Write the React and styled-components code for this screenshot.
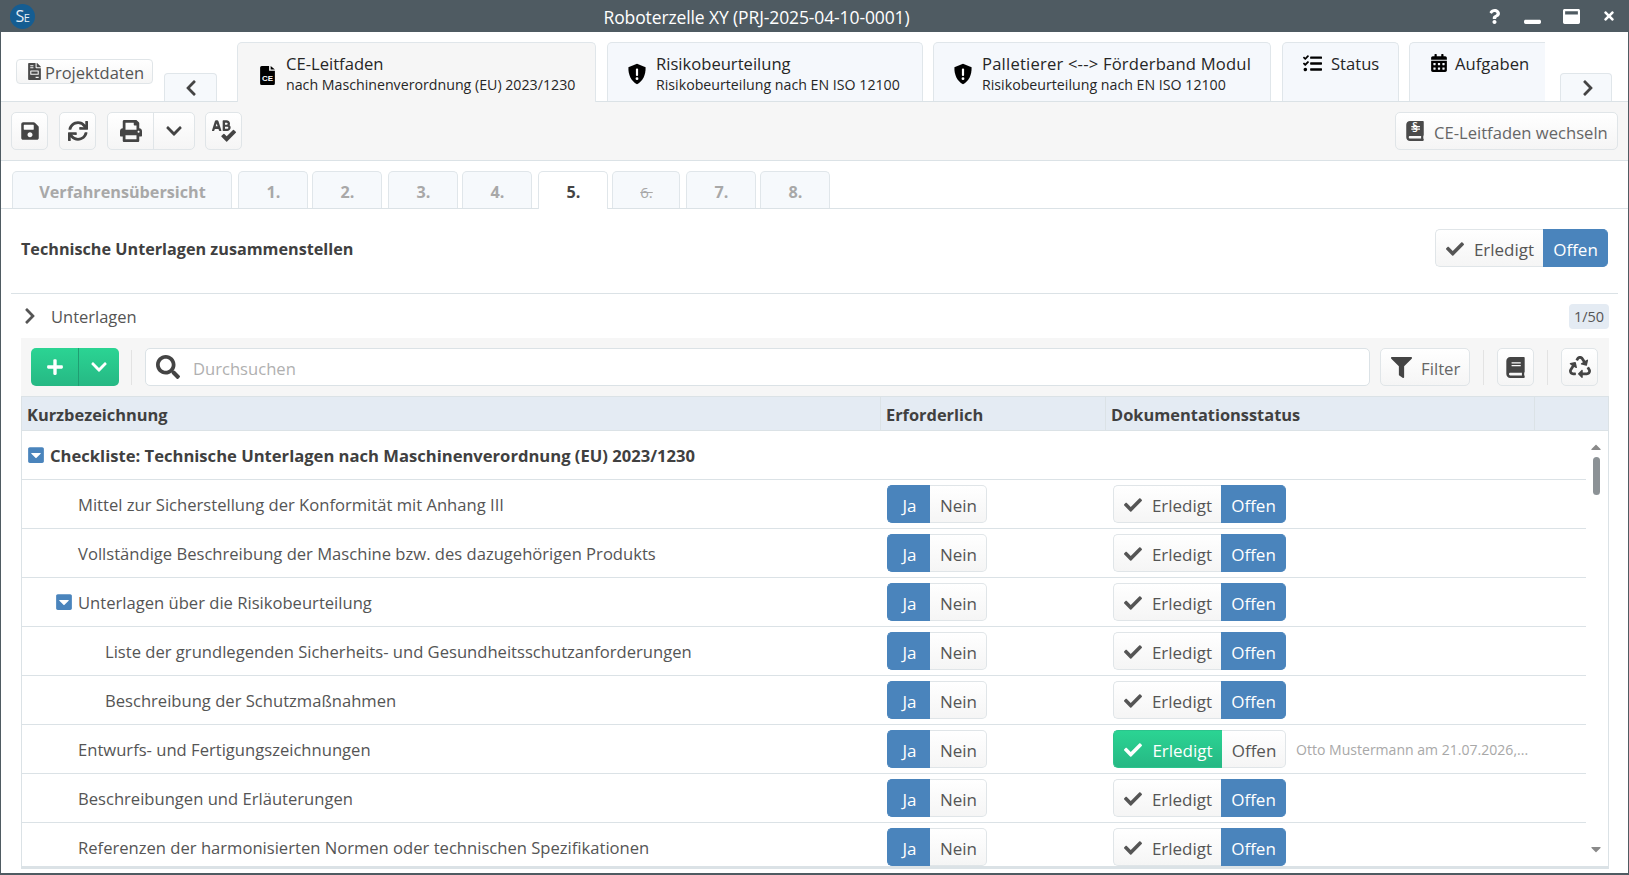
import React from "react";
import styled, { createGlobalStyle } from "styled-components";
import {
  FaSave, FaSync, FaPrint, FaChevronDown, FaChevronLeft, FaChevronRight, FaSpellCheck, FaFileInvoice, FaTasks,
  FaCalendarAlt, FaBook, FaRecycle, FaFilter, FaSearch, FaPlus, FaCheck, FaCaretSquareDown, FaQuestion,
  FaWindowMinimize, FaWindowMaximize, FaTimes, FaCaretUp, FaCaretDown,
} from "react-icons/fa";

const Global = createGlobalStyle`
  html, body { margin: 0; padding: 0; height: 100%; overflow: hidden; background: #fff; }
  * { box-sizing: border-box; }
  body { font-family: "Open Sans", "Liberation Sans", sans-serif; color: #4a4a4a; }
`;

const Win = styled.div`
  width: 1629px; height: 875px; display: flex; flex-direction: column;
  border: 1px solid #4f5b62; border-top: 0; border-bottom-width: 2px; overflow: hidden; background: #fff;
`;
const TitleBar = styled.div`
  height: 32px; flex: none; background: #4f5b62; color: #fff; display: flex; align-items: center;
  padding: 0 12px 0 9px; position: relative; font-size: 17.5px;
`;
const Logo = styled.div`
  width: 25px; height: 25px; border-radius: 50%; background: #155d92; color: #e6eef5; font-size: 16px; font-weight: 400;
  display: flex; align-items: center; justify-content: center; letter-spacing: -0.5px; flex: none;
  small { font-size: 11px; margin-top: 2px; }
`;
const TitleText = styled.div`
  flex: 1; text-align: center; padding: 2px 9px 0 0; letter-spacing: -0.12px;
`;
const WinBtns = styled.div`
  display: flex; align-items: center; gap: 22px; height: 100%;
  svg { display: block; }
`;
const TabRow = styled.div`
  height: 70px; flex: none; display: flex; align-items: flex-end; border-bottom: 1px solid #dbe2e6;
  padding-left: 15px; background: #fff; position: relative;
`;
const ProjectBtn = styled.div`
  width: 137px; height: 25px; align-self: flex-start; margin-top: 27px; margin-right: 11px;
  border: 1px solid #e0e5e8; border-radius: 4px; background: linear-gradient(#fff, #f5f5f5);
  display: flex; align-items: center; padding: 2px 0 0 9px; gap: 2px; font-size: 16.5px; color: #555;
  svg { color: #4a4a4a; margin-top: -3px; }
`;
const ArrowTab = styled.div`
  width: ${(p) => p.$w}px; height: 28px; margin-right: ${(p) => p.$mr || 0}px; margin-left: ${(p) => p.$ml || 0}px;
  padding-left: ${(p) => p.$pl || 0}px;
  background: #f6f9fc; border: 1px solid #e0e6ea; border-bottom: 0; border-radius: 4px 4px 0 0;
  display: flex; align-items: center; justify-content: center; color: #444; margin-bottom: 0;
`;
const DocTab = styled.div`
  width: ${(p) => p.$w}px; height: 59px; margin-right: ${(p) => p.$mr ?? 10}px; flex: none;
  background: ${(p) => (p.$active ? "#f6f6f6" : "#f5f8fc")};
  border: 1px solid #e0e6ea; border-bottom: 0; border-radius: 5px 5px 0 0;
  ${(p) => p.$cut && "border-right: 0; border-top-right-radius: 0;"}
  ${(p) => p.$active && "position: relative; margin-bottom: -1px; height: 60px;"}
  display: flex; align-items: ${(p) => (p.$single ? "flex-start" : "center")};
  padding: ${(p) => (p.$single ? "10px 0 0 20px" : "0 0 0 " + (p.$pl || 21) + "px")}; gap: ${(p) => p.$gap ?? 10}px; color: #222;
`;
const TabIcon = styled.div`
  flex: none; display: flex; color: #000; ${(p) => p.$top && `margin-top: ${p.$top}px;`}
`;
const TabText = styled.div`
  display: flex; flex-direction: column; line-height: 20px; white-space: nowrap; margin-top: 3px;
`;
const TabMain = styled.span`
  font-size: 16.6px; color: #262626; line-height: 22px; letter-spacing: ${(p) => p.$spread || 0}px;
`;
const TabSub = styled.span`
  font-size: 14.2px; color: #262626; line-height: 20px;
`;
const Tools = styled.div`
  height: 59px; flex: none; background: #f6f6f6; border-bottom: 1px solid #dbe2e6; display: flex;
  align-items: flex-start; padding: 10px 10px 0 10px; position: relative;
`;
const IconBtn = styled.div`
  width: ${(p) => p.$w || 37}px; height: 38px; margin-right: ${(p) => p.$mr ?? 11}px; flex: none;
  border: 1px solid #e0e5e8; border-radius: 5px; background: linear-gradient(#fff, #f5f5f5);
  display: flex; align-items: center; justify-content: center; color: #444;
`;
const SplitBtn = styled.div`
  display: flex; height: 38px; border: 1px solid #e0e5e8; border-radius: 5px; background: linear-gradient(#fff, #f5f5f5);
  margin-right: 10px; color: #444;
`;
const SplitPart = styled.div`
  width: ${(p) => p.$w}px; display: flex; align-items: center; justify-content: center;
  & + & { border-left: 1px solid #e0e5e8; }
`;
const SwitchBtn = styled.div`
  margin-left: auto; width: 223px; height: 38px; border: 1px solid #e0e5e8; border-radius: 5px;
  background: linear-gradient(#fff, #f5f5f5); display: flex; align-items: center; padding-left: 9px; gap: 9px;
  font-size: 16.6px; color: #666; white-space: nowrap; position: relative;
`;
const SwitchLabel = styled.span` padding-top: 2px; `;
const ParaBook = styled.span`
  position: relative; display: flex; color: #4a4a4a;
  b { position: absolute; left: 0; right: 0; top: -2px; text-align: center; font-size: 12px; color: #fff; font-weight: 600; }
`;
const StepBar = styled.div`
  height: 48px; flex: none; display: flex; align-items: flex-end; padding-left: 11px; border-bottom: 1px solid #dbe2e6;
`;
const Step = styled.div`
  width: ${(p) => p.$w}px; height: 37px; margin-right: ${(p) => p.$mr}px; flex: none; padding: 3px 0 0 1px;
  background: ${(p) => (p.$active ? "#fff" : "#f6f9fc")}; border: 1px solid #e0e6ea; border-bottom: 0; border-radius: 5px 5px 0 0;
  ${(p) => p.$active && "margin-bottom: -1px; height: 38px; padding-top: 2px;"}
  display: flex; align-items: center; justify-content: center; font-size: 16.2px;
  font-weight: ${(p) => (p.$off ? 400 : 700)}; color: ${(p) => (p.$active ? "#444" : "#a8a8a8")};
  ${(p) => p.$off && "text-decoration: line-through; font-size: 15px;"}
`;
const Content = styled.div`
  flex: 1; min-height: 0; display: flex; flex-direction: column; padding: 0 10px;
`;
const SectionHead = styled.div`
  height: 85px; flex: none; display: flex; align-items: flex-start; justify-content: space-between;
  border-bottom: 1px solid #dbe2e6; padding: 20px 10px 0 10px;
`;
const SectionTitle = styled.div`
  font-size: 16.2px; font-weight: 700; color: #404040; line-height: 40px;
`;
const Toggle = styled.div`
  display: flex; height: 38px; border-radius: 5px; flex: none; font-size: 17px;
`;
const Seg = styled.div`
  width: ${(p) => p.$w}px; display: flex; align-items: center; gap: 10px; justify-content: center; padding: 2px 0 0 1px;
  border: 1px solid #e0e5e8; background: linear-gradient(#fff, #f5f5f5); color: #555;
  svg { margin-top: -1px; }
  &:first-child { border-radius: 5px 0 0 5px; border-right: 0; }
  &:last-child { border-radius: 0 5px 5px 0; border-left: 0; }
  ${(p) => p.$blue && "background: #4a84bc; border-color: #4a84bc !important; color: #fff;"}
  ${(p) => p.$green && "background: linear-gradient(#2bd493, #26b884); border-color: #2bc48c !important; color: #fff;"}
`;
const Accordion = styled.div`
  height: 44px; flex: none; display: flex; align-items: center; padding: 0 9px 0 10px; font-size: 16.5px; color: #555;
`;
const AccLabel = styled.span` margin-left: 12px; flex: 1; `;
const Badge = styled.span`
  width: 40px; height: 25px; background: #e4ebf3; border-radius: 4px; font-size: 14.5px; display: flex;
  align-items: center; justify-content: center; color: #555;
`;
const Panel = styled.div`
  margin-left: 10px; margin-right: 9px; flex: 1; min-height: 0; display: flex; flex-direction: column;
`;
const SearchBar = styled.div`
  height: 58px; flex: none; background: #f6f6f6; display: flex; align-items: center; padding: 0 11px 0 10px;
`;
const GreenBtn = styled.div`
  display: flex; width: 88px; height: 38px; border-radius: 5px; background: linear-gradient(#2bd493, #26b884); color: #fff;
`;
const GreenPart = styled.div`
  display: flex; align-items: center; justify-content: center; width: ${(p) => p.$w}px;
  & + & { border-left: 1px solid #1f9e72; }
`;
const VLine = styled.div`
  width: 1px; height: 35px; background: #e3e3e3; margin: 0 ${(p) => p.$r}px 0 ${(p) => p.$l}px; flex: none;
`;
const SearchBox = styled.div`
  flex: 1; height: 38px; border: 1px solid #dbe2e6; border-radius: 5px; background: #fff; display: flex; align-items: center;
  padding: 2px 0 0 10px; gap: 13px; font-size: 16.6px; color: #b0b0b0; margin-right: 10px;
  svg { color: #444; margin-top: -2px; }
`;
const FilterBtn = styled.div`
  width: 90px; height: 38px; flex: none; border: 1px solid #e0e5e8; border-radius: 5px; background: linear-gradient(#fff, #f5f5f5);
  display: flex; align-items: center; padding: 2px 0 0 10px; gap: 9px; font-size: 16.8px; color: #666;
  svg { color: #444; margin-top: -2px; }
`;
const TableHead = styled.div`
  height: 35px; flex: none; display: grid; grid-template-columns: 858px 225px 429px 1fr; background: #e4ebf3;
  border-top: 1px solid #dbe2e6; border-bottom: 1px solid #dbe2e6; border-left: 1px solid #dbe2e6; border-right: 1px solid #dbe2e6;
`;
const HeadCell = styled.div`
  padding: 2px 0 0 5px; font-size: 16.4px; font-weight: 700; color: #404040; display: flex; align-items: center;
  & + & { border-left: 1px solid #dbe2e6; }
`;
const BodyWrap = styled.div`
  height: 438px; flex: none; display: flex; overflow: hidden; border-left: 1px solid #dbe2e6; border-right: 1px solid #dbe2e6;
  border-bottom: 3px solid #dbe2e6;
`;
const Rows = styled.div`
  flex: 1; min-width: 0; overflow: hidden;
`;
const Row = styled.div`
  height: 49px; flex: none; display: grid; grid-template-columns: 858px 226px 1fr;
  border-bottom: 1px solid #dbe2e6; align-items: start;
`;
const NameCell = styled.div`
  height: 48px; display: flex; align-items: center; padding-left: ${(p) => p.$indent}px; font-size: 16.6px; color: #555; white-space: nowrap;
  font-weight: ${(p) => (p.$bold ? 700 : 400)}; ${(p) => p.$bold && "color: #404040;"}
  svg { color: #4a84bc; margin-right: 5px; background: #fff; flex: none; }
`;
const CtlCell = styled.div`
  padding: 5px 0 0 7px; display: flex; align-items: flex-start;
`;
const Note = styled.div`
  font-size: 14.05px; color: #a8a8a8; margin-left: 10px; height: 38px; display: flex; align-items: center; white-space: nowrap;
`;
const Scroll = styled.div`
  width: 22px; flex: none; position: relative; color: #8a8a8a;
`;
const ScrollUp = styled.div` position: absolute; top: 8px; left: 2px; display: flex; `;
const ScrollDown = styled.div` position: absolute; bottom: 9px; left: 2px; display: flex; `;
const Thumb = styled.div`
  position: absolute; top: 26px; left: 7px; width: 7px; height: 38px; background: #8c9296; border-radius: 4px;
`;

const Shield = ({ size = 22 }) => (
  <svg width={size} height={size} viewBox="0 0 20 22">
    <path d="M10 .8 18.6 4.2c.2 7.6-2.6 13.8-8.6 17-6-3.2-8.8-9.4-8.6-17z" fill="#000" />
    <rect x="8.9" y="5.4" width="2.2" height="7.6" rx="1" fill="#fff" />
    <circle cx="10" cy="15.7" r="1.4" fill="#fff" />
  </svg>
);
const CeFile = () => (
  <svg width="15" height="19" viewBox="0 0 14 18">
    <path d="M1.5 0H8.5V4.5H14V16.5a1.5 1.5 0 0 1-1.5 1.5H1.5A1.5 1.5 0 0 1 0 16.5V1.5A1.5 1.5 0 0 1 1.5 0ZM10 0l4 3.4H10Z" fill="#000" />
    <text x="7" y="14.2" fontSize="7.5" fontWeight="700" fill="#fff" textAnchor="middle" fontFamily="Liberation Sans">CE</text>
  </svg>
);
const rows = [
  { name: "Mittel zur Sicherstellung der Konformität mit Anhang III", indent: 56 },
  { name: "Vollständige Beschreibung der Maschine bzw. des dazugehörigen Produkts", indent: 56 },
  { name: "Unterlagen über die Risikobeurteilung", indent: 33, caret: true },
  { name: "Liste der grundlegenden Sicherheits- und Gesundheitsschutzanforderungen", indent: 83 },
  { name: "Beschreibung der Schutzmaßnahmen", indent: 83 },
  { name: "Entwurfs- und Fertigungszeichnungen", indent: 56, done: true },
  { name: "Beschreibungen und Erläuterungen", indent: 56 },
  { name: "Referenzen der harmonisierten Normen oder technischen Spezifikationen", indent: 56 },
];

const StatusToggle = ({ done, w1 = 108, w2 = 65 }) => (
  <Toggle>
    <Seg $w={w1} $green={done}><FaCheck size={18} />Erledigt</Seg>
    <Seg $w={w2} $blue={!done}>Offen</Seg>
  </Toggle>
);

export default function App() {
  return (
    <Win>
      <Global />
      <TitleBar>
        <Logo>S<small>E</small></Logo>
        <TitleText>Roboterzelle XY (PRJ-2025-04-10-0001)</TitleText>
        <WinBtns>
          <FaQuestion size={15} />
          <FaWindowMinimize size={17} />
          <FaWindowMaximize size={17} />
          <FaTimes size={14} />
        </WinBtns>
      </TitleBar>
      <TabRow>
        <ProjectBtn><FaFileInvoice size={17} />Projektdaten</ProjectBtn>
        <ArrowTab $w={53} $mr={20}><FaChevronLeft size={18} /></ArrowTab>
        <DocTab $w={359} $mr={11} $active $pl={22} $gap={11}>
          <TabIcon $top={6}><CeFile /></TabIcon>
          <TabText><TabMain>CE-Leitfaden</TabMain><TabSub>nach Maschinenverordnung (EU) 2023/1230</TabSub></TabText>
        </DocTab>
        <DocTab $w={316} $pl={18} $gap={8}>
          <TabIcon $top={3}><Shield /></TabIcon>
          <TabText><TabMain>Risikobeurteilung</TabMain><TabSub>Risikobeurteilung nach EN ISO 12100</TabSub></TabText>
        </DocTab>
        <DocTab $w={338} $mr={11} $pl={18} $gap={8}>
          <TabIcon $top={3}><Shield /></TabIcon>
          <TabText><TabMain $spread={0.2}>Palletierer &lt;--&gt; Förderband Modul</TabMain><TabSub>Risikobeurteilung nach EN ISO 12100</TabSub></TabText>
        </DocTab>
        <DocTab $w={117} $single $gap={9}>
          <TabIcon $top={1}><FaTasks size={19} /></TabIcon><TabMain>Status</TabMain>
        </DocTab>
        <DocTab $w={136} $mr={0} $single $cut $gap={7}>
          <TabIcon $top={1}><FaCalendarAlt size={18} /></TabIcon><TabMain>Aufgaben</TabMain>
        </DocTab>
        <ArrowTab $w={52} $ml={15} $pl={4}><FaChevronRight size={18} /></ArrowTab>
      </TabRow>
      <Tools>
        <IconBtn><FaSave size={20} /></IconBtn>
        <IconBtn><FaSync size={20} /></IconBtn>
        <SplitBtn>
          <SplitPart $w={45}><FaPrint size={22} /></SplitPart>
          <SplitPart $w={41}><FaChevronDown size={18} /></SplitPart>
        </SplitBtn>
        <IconBtn $mr={0}><FaSpellCheck size={24} /></IconBtn>
        <SwitchBtn>
          <ParaBook><FaBook size={20} /><b>§</b></ParaBook>
          <SwitchLabel>CE-Leitfaden wechseln</SwitchLabel>
        </SwitchBtn>
      </Tools>
      <StepBar>
        <Step $w={220} $mr={6}>Verfahrensübersicht</Step>
        <Step $w={70} $mr={4}>1.</Step>
        <Step $w={70} $mr={6}>2.</Step>
        <Step $w={70} $mr={4}>3.</Step>
        <Step $w={70} $mr={6}>4.</Step>
        <Step $w={70} $mr={4} $active>5.</Step>
        <Step $w={68} $mr={6} $off>6.</Step>
        <Step $w={70} $mr={4}>7.</Step>
        <Step $w={70} $mr={0}>8.</Step>
      </StepBar>
      <Content>
        <SectionHead>
          <SectionTitle>Technische Unterlagen zusammenstellen</SectionTitle>
          <StatusToggle w1={108} w2={65} />
        </SectionHead>
        <Accordion>
          <FaChevronRight size={18} />
          <AccLabel>Unterlagen</AccLabel>
          <Badge>1/50</Badge>
        </Accordion>
        <Panel>
          <SearchBar>
            <GreenBtn>
              <GreenPart $w={47}><FaPlus size={18} /></GreenPart>
              <GreenPart $w={41}><FaChevronDown size={18} /></GreenPart>
            </GreenBtn>
            <VLine $l={12} $r={13} />
            <SearchBox><FaSearch size={24} />Durchsuchen</SearchBox>
            <FilterBtn><FaFilter size={21} />Filter</FilterBtn>
            <VLine $l={13} $r={13} />
            <IconBtn $mr={0}><FaBook size={21} /></IconBtn>
            <VLine $l={13} $r={13} />
            <IconBtn $mr={0}><FaRecycle size={22} /></IconBtn>
          </SearchBar>
          <TableHead>
            <HeadCell>Kurzbezeichnung</HeadCell>
            <HeadCell>Erforderlich</HeadCell>
            <HeadCell>Dokumentationsstatus</HeadCell>
            <HeadCell />
          </TableHead>
          <BodyWrap>
            <Rows>
              <Row>
                <NameCell $indent={5} $bold><FaCaretSquareDown size={18} />Checkliste: Technische Unterlagen nach Maschinenverordnung (EU) 2023/1230</NameCell>
              </Row>
              {rows.map((r) => (
                <Row key={r.name}>
                  <NameCell $indent={r.indent}>{r.caret && <FaCaretSquareDown size={18} />}{r.name}</NameCell>
                  <CtlCell>
                    <Toggle><Seg $w={43} $blue>Ja</Seg><Seg $w={57}>Nein</Seg></Toggle>
                  </CtlCell>
                  <CtlCell>
                    <StatusToggle done={r.done} w1={r.done ? 109 : 108} w2={r.done ? 64 : 65} />
                    {r.done && <Note>Otto Mustermann am 21.07.2026,...</Note>}
                  </CtlCell>
                </Row>
              ))}
            </Rows>
            <Scroll>
              <ScrollUp><FaCaretUp size={16} /></ScrollUp>
              <Thumb />
              <ScrollDown><FaCaretDown size={16} /></ScrollDown>
            </Scroll>
          </BodyWrap>
        </Panel>
      </Content>
    </Win>
  );
}
